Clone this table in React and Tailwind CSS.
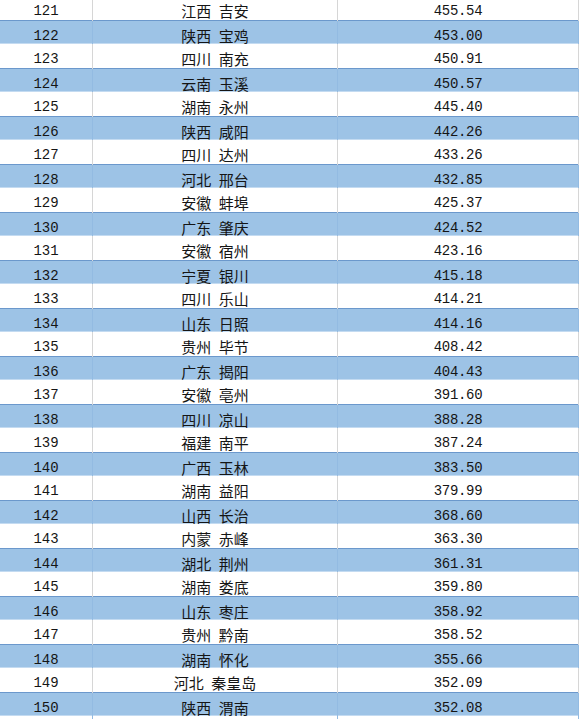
import React from 'react';

const rows = [
  [121, '江西 吉安', '455.54'],
  [122, '陕西 宝鸡', '453.00'],
  [123, '四川 南充', '450.91'],
  [124, '云南 玉溪', '450.57'],
  [125, '湖南 永州', '445.40'],
  [126, '陕西 咸阳', '442.26'],
  [127, '四川 达州', '433.26'],
  [128, '河北 邢台', '432.85'],
  [129, '安徽 蚌埠', '425.37'],
  [130, '广东 肇庆', '424.52'],
  [131, '安徽 宿州', '423.16'],
  [132, '宁夏 银川', '415.18'],
  [133, '四川 乐山', '414.21'],
  [134, '山东 日照', '414.16'],
  [135, '贵州 毕节', '408.42'],
  [136, '广东 揭阳', '404.43'],
  [137, '安徽 亳州', '391.60'],
  [138, '四川 凉山', '388.28'],
  [139, '福建 南平', '387.24'],
  [140, '广西 玉林', '383.50'],
  [141, '湖南 益阳', '379.99'],
  [142, '山西 长治', '368.60'],
  [143, '内蒙 赤峰', '363.30'],
  [144, '湖北 荆州', '361.31'],
  [145, '湖南 娄底', '359.80'],
  [146, '山东 枣庄', '358.92'],
  [147, '贵州 黔南', '358.52'],
  [148, '湖南 怀化', '355.66'],
  [149, '河北 秦皇岛', '352.09'],
  [150, '陕西 渭南', '352.08'],
];

const mono = { fontFamily: '"Liberation Mono", "DejaVu Sans Mono", monospace' };
const cjk = { fontFamily: '"Noto Sans CJK SC", "Noto Sans", sans-serif' };

function Row({ rank, city, score, shaded }) {
  const rowCls = shaded
    ? 'bg-[#9dc3e6] border-t border-t-[#6b98cc] border-b border-b-[#c4dbf1]'
    : 'bg-white';
  const line = shaded ? 'border-r-[#93bbe2]' : 'border-r-[#d6d6d6]';

  return (
    <div className={`grid grid-cols-[93px_245px_241px] h-[24px] text-[#151515] ${rowCls}`}>
      <div className={`flex items-center justify-center pt-[5px] border-r ${line} text-[14px]`} style={mono}>
        {rank}
      </div>
      <div className={`flex items-center justify-center pt-[4px] border-r ${line} text-[15px] [word-spacing:4px]`} style={cjk}>
        {city}
      </div>
      <div className={`flex items-center justify-center pt-[5px] border-r ${line} text-[14px] tracking-[-0.3px]`} style={mono}>
        {score}
      </div>
    </div>
  );
}

export default function App() {
  return (
    <div className="w-[583px] h-[719px] overflow-hidden bg-white">
      <div className="-mt-[4px] w-[579px]">
        {rows.map(([rank, city, score], i) => (
          <Row key={rank} rank={rank} city={city} score={score} shaded={i % 2 === 1} />
        ))}
      </div>
    </div>
  );
}
